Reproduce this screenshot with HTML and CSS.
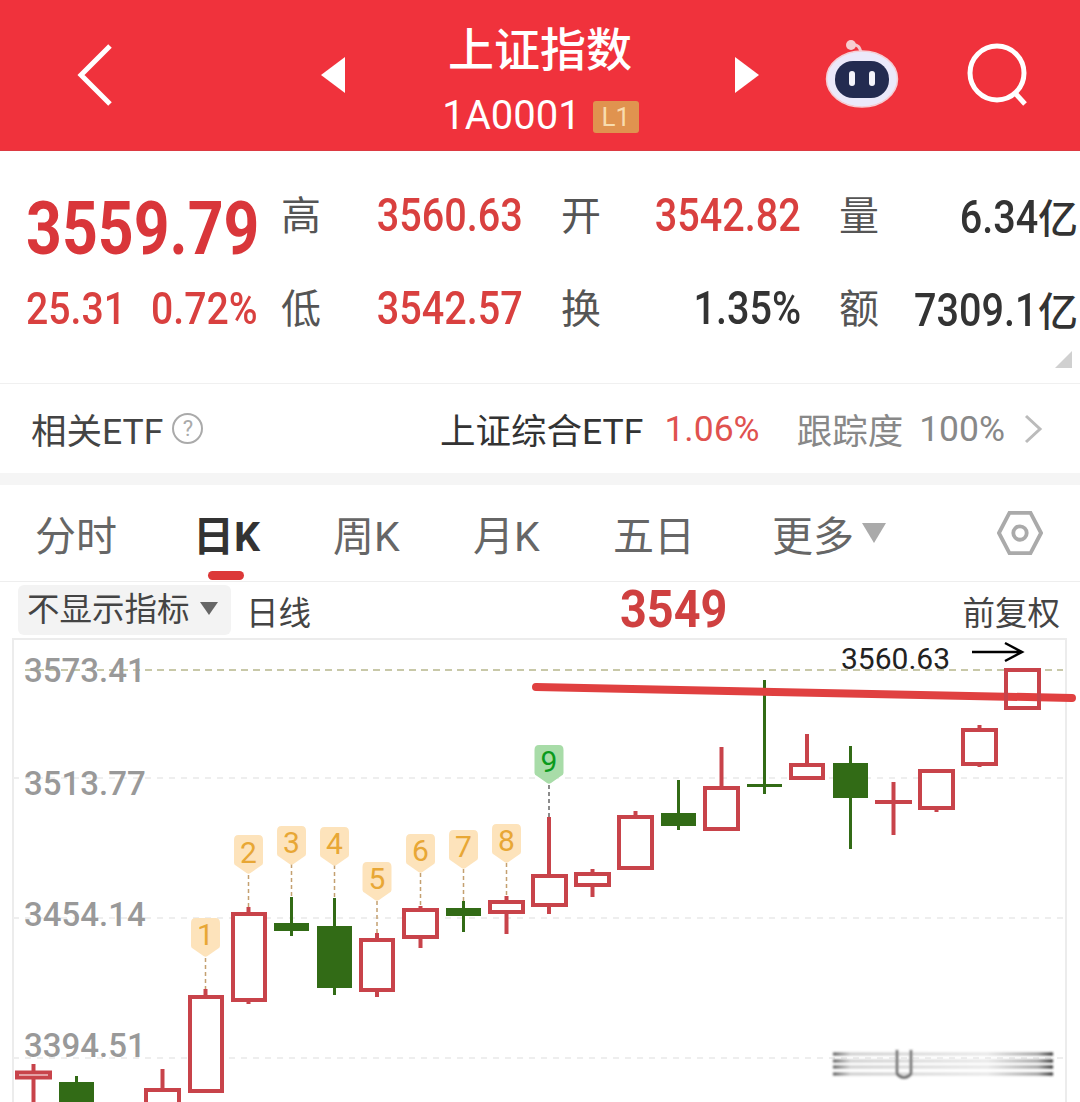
FILE: index.html
```html
<!DOCTYPE html>
<html lang="zh-CN">
<head>
    <meta charset="UTF-8">
    <meta name="viewport" content="width=device-width, initial-scale=1.0">
    <title>上证指数</title>
    <link rel="stylesheet" href="styles.css">
</head>
<body>
    <header class="top-bar">
        <svg class="icon-back" viewBox="0 0 38 64"><path d="M34 3 L5 32 L34 61"/></svg>
        <span class="tri tri-left"></span>
        <div class="title-block">
            <div class="title">上证指数</div>
            <div class="code">1A0001 <span class="level">L1</span></div>
        </div>
        <span class="tri tri-right"></span>
        <svg class="icon-robot" viewBox="0 0 74 70">
            <path class="robot-stalk" d="M26 6 C33 5 35 8 36 14"/>
            <circle class="robot-ball" cx="26" cy="6" r="5"/>
            <ellipse class="robot-head" cx="37" cy="40" rx="35.500" ry="28"/>
            <rect class="robot-face" x="10" y="22" width="54" height="37" rx="18"/>
            <rect class="robot-eye" x="24" y="32" width="6" height="15" rx="3"/>
            <rect class="robot-eye" x="44" y="32" width="6" height="15" rx="3"/>
        </svg>
        <svg class="icon-search" viewBox="0 0 64 64"><circle cx="30" cy="30" r="27"/><path d="M48 50 L58 61"/></svg>
    </header>

    <section class="quote">
        <div class="price">3559.79</div>
        <div class="lbl first">高</div>
        <div class="val up"><span class="num">3560.63</span></div>
        <div class="lbl">开</div>
        <div class="val up"><span class="num">3542.82</span></div>
        <div class="lbl">量</div>
        <div class="val"><span class="num">6.34</span>亿</div>

        <div class="change up"><span>25.31</span><span>0.72%</span></div>
        <div class="lbl first">低</div>
        <div class="val up"><span class="num">3542.57</span></div>
        <div class="lbl">换</div>
        <div class="val"><span class="num">1.35%</span></div>
        <div class="lbl">额</div>
        <div class="val"><span class="num">7309.1</span>亿</div>
        <span class="corner"></span>
    </section>

    <section class="etf-row">
        <span class="etf-name">相关ETF</span>
        <span class="help">?</span>
        <div class="etf-right">
            <span class="etf-fund">上证综合ETF</span>
            <span class="etf-pct">1.06%</span>
            <span class="etf-track">跟踪度</span>
            <span class="etf-track">100%</span>
            <svg class="icon-next" viewBox="0 0 20 32"><path d="M3 3 L17 16 L3 29"/></svg>
        </div>
    </section>

    <div class="gap"></div>

    <nav class="tabs">
        <span class="tab">分时</span>
        <span class="tab active">日K</span>
        <span class="tab">周K</span>
        <span class="tab">月K</span>
        <span class="tab">五日</span>
        <span class="tab">更多<i class="tab-caret"></i></span>
        <svg class="icon-hex" viewBox="0 0 48 48"><path d="M13 3 H35 L46 24 L35 45 H13 L2 24 Z"/><circle cx="24" cy="24" r="7"/></svg>
    </nav>

    <div class="sub-row">
        <div class="chip">不显示指标<i class="chip-caret"></i></div>
        <span class="period">日线</span>
        <span class="note-price">3549</span>
        <span class="adjust">前复权</span>
    </div>

    <svg class="chart" viewBox="0 638 1080 464">
        <defs>
            <path id="badge" d="M-10 0 H10 Q14.500 0 14.500 5 V28 Q14.500 30 12 31 L2 38 Q0 39.500 -2 38 L-12 31 Q-14.500 30 -14.500 28 V5 Q-14.500 0 -10 0 Z"/>
            <linearGradient id="fade" gradientUnits="userSpaceOnUse" x1="833" x2="1053" y1="0" y2="0">
                <stop offset="0" stop-color="#555"/>
                <stop offset="0.08" stop-color="#ccc"/>
                <stop offset="0.7" stop-color="#e6e6e6"/>
                <stop offset="0.93" stop-color="#999"/>
                <stop offset="1" stop-color="#222"/>
            </linearGradient>
            <filter id="soft"><feGaussianBlur stdDeviation="1.200"/></filter>
        </defs>

        <!-- frame -->
        <path class="frame" d="M13 1102 V639 H1066 V1102"/>

        <!-- price grid -->
        <line class="grid-top" x1="25" y1="670" x2="1063" y2="670"/>
        <line class="grid" x1="13" y1="778" x2="1066" y2="778"/>
        <line class="grid" x1="13" y1="918" x2="1066" y2="918"/>
        <line class="grid" x1="13" y1="1058" x2="1066" y2="1058"/>
        <text class="axis" x="24" y="682">3573.41</text>
        <text class="axis" x="24" y="795">3513.77</text>
        <text class="axis" x="24" y="926">3454.14</text>
        <text class="axis" x="24" y="1057">3394.51</text>

        <!-- red candles: wick then hollow body -->
        <g class="up-candle">
            <line x1="33.500" y1="1064" x2="33.500" y2="1102"/><rect x="17" y="1072.500" width="33" height="5"/>
            <line x1="162.500" y1="1069" x2="162.500" y2="1090"/><rect x="146" y="1090" width="33" height="20"/>
            <line x1="205.500" y1="989" x2="205.500" y2="998"/><rect x="190" y="997" width="32" height="94"/>
            <line x1="248.500" y1="907" x2="248.500" y2="1004"/><rect x="233" y="914" width="32" height="86"/>
            <line x1="377" y1="933" x2="377" y2="997"/><rect x="361" y="940" width="32" height="50"/>
            <line x1="420.500" y1="906" x2="420.500" y2="948"/><rect x="404" y="910" width="33" height="27"/>
            <line x1="506.500" y1="896" x2="506.500" y2="934"/><rect x="490" y="902" width="33" height="10"/>
            <line x1="549" y1="817" x2="549" y2="914"/><rect x="533" y="876" width="33" height="29"/>
            <line x1="592.500" y1="869" x2="592.500" y2="897"/><rect x="576" y="874" width="33" height="11"/>
            <line x1="635.500" y1="811" x2="635.500" y2="820"/><rect x="619" y="817" width="33" height="51"/>
            <line x1="721.500" y1="747" x2="721.500" y2="790"/><rect x="705" y="788" width="33" height="41"/>
            <line x1="807" y1="734" x2="807" y2="766"/><rect x="791" y="765" width="32" height="13"/>
            <line x1="893.500" y1="782" x2="893.500" y2="835"/><line x1="875" y1="802" x2="912" y2="802"/>
            <line x1="936.500" y1="805" x2="936.500" y2="812"/><rect x="920" y="771" width="33" height="37"/>
            <line x1="979.500" y1="725" x2="979.500" y2="767"/><rect x="963" y="730" width="33" height="34"/>
        </g>

        <!-- green candles -->
        <g class="down-candle">
            <line x1="76.500" y1="1076" x2="76.500" y2="1084"/><rect x="59" y="1082" width="35" height="20"/>
            <line x1="291.500" y1="897" x2="291.500" y2="936"/><rect x="274" y="923" width="35" height="8"/>
            <line x1="334.500" y1="898" x2="334.500" y2="995"/><rect x="317" y="926" width="35" height="62"/>
            <line x1="463.500" y1="901" x2="463.500" y2="932"/><rect x="446" y="908" width="35" height="8"/>
            <line x1="678.500" y1="780" x2="678.500" y2="830"/><rect x="661" y="813" width="35" height="13"/>
            <line x1="764.500" y1="680" x2="764.500" y2="794"/><rect x="747" y="784" width="35" height="3"/>
            <line x1="850.500" y1="746" x2="850.500" y2="849"/><rect x="833" y="763" width="35" height="35"/>
        </g>

        <!-- sequence badges -->
        <g class="seq">
            <line x1="205.500" y1="958" x2="205.500" y2="989"/>
            <line x1="248.500" y1="875" x2="248.500" y2="907"/>
            <line x1="291.500" y1="864" x2="291.500" y2="897"/>
            <line x1="334.500" y1="865" x2="334.500" y2="898"/>
            <line x1="377" y1="901" x2="377" y2="933"/>
            <line x1="420.500" y1="873" x2="420.500" y2="906"/>
            <line x1="463.500" y1="869" x2="463.500" y2="901"/>
            <line x1="506.500" y1="863" x2="506.500" y2="896"/>
            <line class="seq-green" x1="549" y1="785" x2="549" y2="817"/>
        </g>
        <g class="badge" transform="translate(205.500 918)"><use href="#badge"/><text y="27">1</text></g>
        <g class="badge" transform="translate(248.500 835)"><use href="#badge"/><text y="28">2</text></g>
        <g class="badge" transform="translate(291.500 826)"><use href="#badge"/><text y="27">3</text></g>
        <g class="badge" transform="translate(334.500 827)"><use href="#badge"/><text y="27">4</text></g>
        <g class="badge" transform="translate(377 862)"><use href="#badge"/><text y="27">5</text></g>
        <g class="badge" transform="translate(420.500 834)"><use href="#badge"/><text y="27">6</text></g>
        <g class="badge" transform="translate(463.500 830)"><use href="#badge"/><text y="27">7</text></g>
        <g class="badge" transform="translate(506.500 824)"><use href="#badge"/><text y="27">8</text></g>
        <g class="badge badge-green" transform="translate(549 745)"><use href="#badge"/><text y="27">9</text></g>

        <!-- hand drawn notes over the chart -->
        <line class="hand-line" x1="536" y1="687" x2="1072" y2="698"/>
        <rect class="top-candle" x="1006" y="670" width="33" height="38"/>
        <text class="high-mark" x="841" y="669">3560.63</text>
        <path class="arrow" d="M972 652 H1022 M1005 643 L1022 652 L1005 661"/>

        <!-- blurred watermark -->
        <g class="smudge">
            <line x1="833" y1="1054" x2="1053" y2="1054"/>
            <line x1="833" y1="1061" x2="1053" y2="1061"/>
            <line x1="833" y1="1067" x2="1053" y2="1067"/>
            <line x1="833" y1="1074" x2="1053" y2="1074"/>
            <path class="smudge-u" d="M897 1050 V1074 Q904 1081 911 1074 V1050"/>
        </g>
    </svg>
</body>
</html>
```

FILE: styles.css
```css
* {
    box-sizing: border-box;
}
html, body {
    margin: 0;
    height: 1102px;
    overflow: hidden;
    background-color: #fff;
}
body {
    font-family: Roboto, "Noto Sans CJK SC", sans-serif;
    color: #333;
}

/* header */
.top-bar {
    display: flex;
    align-items: center;
    height: 151px;
    background-color: #f0323c;
    border-bottom: 1px solid #dc3a42;
    color: #fff;
    position: relative;
}
.icon-back {
    width: 38px;
    height: 64px;
    margin-left: 76px;
    fill: none;
    stroke: #fff;
    stroke-width: 5;
}
.tri {
    width: 0;
    height: 0;
    border-top: 18px solid transparent;
    border-bottom: 18px solid transparent;
}
.tri-left {
    margin-left: 207px;
    border-right: 24px solid #fff;
}
.tri-right {
    border-left: 24px solid #fff;
}
.title-block {
    width: 390px;
    text-align: center;
}
.title {
    font-size: 46px;
    line-height: 50px;
    font-weight: 500;
    margin-top: 13px;
}
.code {
    font-size: 40px;
    line-height: 44px;
    margin-top: 19px;
    padding-left: 1px;
}
.level {
    display: inline-block;
    width: 46px;
    height: 32px;
    margin-left: 2px;
    background-color: #e0934f;
    border-radius: 3px;
    color: #f8dcae;
    font-size: 26px;
    line-height: 32px;
    text-align: center;
    vertical-align: 3px;
}
.icon-robot {
    width: 74px;
    height: 70px;
    margin-left: 66px;
    margin-top: -2px;
}
.robot-stalk {
    fill: none;
    stroke: #f5c6cc;
    stroke-width: 3;
}
.robot-ball {
    fill: #f7cdd0;
}
.robot-head {
    fill: #ebe9fa;
    stroke: #f6cdd3;
    stroke-width: 1.500;
}
.robot-face {
    fill: #232b50;
}
.robot-eye {
    fill: #f4f4fa;
}
.icon-search {
    width: 64px;
    height: 64px;
    margin-left: 68px;
    fill: none;
    stroke: #fff;
    stroke-width: 5;
}

/* quote block */
.quote {
    display: grid;
    grid-template-columns: 255px 42px 200px 78px 200px 78px 199px;
    grid-template-rows: 93px 93px;
    align-items: center;
    height: 232px;
    padding: 18px 0 0 26px;
    position: relative;
    font-size: 40px;
    font-weight: 500;
}
.price {
    font-size: 74px;
    font-weight: 700;
    line-height: 74px;
    color: #d9363a;
    margin-top: 26px;
    transform: scaleX(0.845);
    transform-origin: left center;
}
.change {
    display: flex;
    font-size: 45px;
    white-space: nowrap;
    color: #d9403f;
}
.change span {
    flex: 0 0 125px;
    transform: scaleX(0.87);
    transform-origin: left center;
}
.lbl {
    font-size: 40px;
    font-weight: 400;
    color: #555;
    text-align: right;
    margin-bottom: 6px;
}
.lbl.first {
    text-align: left;
}
.val {
    text-align: right;
    white-space: nowrap;
    color: #333;
}
.num {
    display: inline-block;
    font-size: 46px;
    line-height: 50px;
    transform: scaleX(0.86);
    transform-origin: right center;
}
.up {
    color: #d9403f;
}
.corner {
    position: absolute;
    right: 8px;
    bottom: 15px;
    width: 0;
    height: 0;
    border-left: 17px solid transparent;
    border-bottom: 17px solid #d0d0d0;
}

/* etf row */
.etf-row {
    display: flex;
    align-items: center;
    height: 90px;
    padding: 0 37px 0 31px;
    border-top: 1px solid #f0f0f0;
    font-size: 35.500px;
}
.etf-name {
    color: #444;
}
.help {
    width: 31px;
    height: 31px;
    margin-left: 9px;
    border: 2px solid #aaa;
    border-radius: 50%;
    color: #aaa;
    font-size: 22px;
    line-height: 27px;
    text-align: center;
}
.etf-right {
    display: flex;
    align-items: center;
    margin-left: auto;
}
.etf-fund {
    color: #333;
}
.etf-pct {
    margin-left: 21px;
    margin-right: 21px;
    color: #e0524f;
}
.etf-track {
    margin-left: 16px;
    color: #888;
}
.icon-next {
    width: 20px;
    height: 32px;
    margin-left: 18px;
    fill: none;
    stroke: #bbb;
    stroke-width: 3;
}

.gap {
    height: 12px;
    background-color: #f5f5f5;
}

/* tabs */
.tabs {
    display: grid;
    grid-template-columns: 158px 140px 140px 140px 159px 1fr 46px;
    align-items: center;
    height: 97px;
    padding: 0 37px 0 35px;
    border-bottom: 1px solid #eee;
    font-size: 41px;
    color: #666;
}
.tab {
    position: relative;
}
.tab.active {
    font-weight: 700;
    color: #333;
}
.tab.active::after {
    content: "";
    position: absolute;
    left: 15px;
    top: 68px;
    width: 36px;
    height: 9px;
    background-color: #dc3838;
    border-radius: 5px;
}
.tab-caret {
    display: inline-block;
    margin-left: 8px;
    vertical-align: 8px;
    border-left: 12px solid transparent;
    border-right: 12px solid transparent;
    border-top: 20px solid #aaa;
}
.icon-hex {
    width: 46px;
    height: 46px;
    fill: none;
    stroke: #aaa;
    stroke-width: 4;
}

/* indicator row */
.sub-row {
    display: flex;
    align-items: center;
    height: 56px;
    padding: 0 20px 0 18px;
    font-size: 32.500px;
    color: #444;
}
.chip {
    width: 213px;
    height: 50px;
    padding-left: 9px;
    background-color: #f3f3f3;
    border-radius: 6px;
    line-height: 50px;
    white-space: nowrap;
}
.chip-caret {
    display: inline-block;
    margin-left: 10px;
    vertical-align: 6px;
    border-left: 9px solid transparent;
    border-right: 9px solid transparent;
    border-top: 13px solid #666;
}
.period {
    margin-left: 15px;
}
.note-price {
    margin-left: 303px;
    font-size: 52px;
    line-height: 56px;
    font-weight: 700;
    color: #cf4040;
    transform: scaleX(0.9);
}
.adjust {
    margin-left: auto;
}

/* chart */
.chart {
    display: block;
    width: 1080px;
    height: 464px;
}
.frame {
    fill: none;
    stroke: #ececec;
    stroke-width: 2;
}
.grid {
    stroke: #eee;
    stroke-width: 2;
    stroke-dasharray: 6 6;
}
.grid-top {
    stroke: #c8c8a8;
    stroke-width: 2;
    stroke-dasharray: 7 5;
}
.axis {
    font-size: 33px;
    font-weight: 500;
    fill: #999;
}
.up-candle line, .up-candle rect, .top-candle {
    stroke: #c8434a;
    stroke-width: 4;
    fill: #fff;
}
.top-candle {
    fill: none;
}
.down-candle line {
    stroke: #326b16;
    stroke-width: 3;
}
.down-candle rect {
    fill: #326b16;
}
.seq line {
    stroke: #c4a070;
    stroke-width: 1.500;
    stroke-dasharray: 4 3;
}
.seq .seq-green {
    stroke: #666;
}
.badge use {
    fill: #fde3bb;
}
.badge text {
    font-size: 30px;
    fill: #e8a735;
    text-anchor: middle;
}
.badge-green use {
    fill: #a8dca8;
}
.badge-green text {
    fill: #0b9a1c;
}
.hand-line {
    stroke: #e04040;
    stroke-width: 8;
    stroke-linecap: round;
}
.high-mark {
    font-size: 30px;
    fill: #222;
}
.arrow {
    fill: none;
    stroke: #000;
    stroke-width: 2.500;
}
.smudge {
    filter: url(#soft);
}
.smudge line {
    stroke: url(#fade);
    stroke-width: 3;
}
.smudge-u {
    fill: none;
    stroke: #666;
    stroke-width: 2.500;
}
```
